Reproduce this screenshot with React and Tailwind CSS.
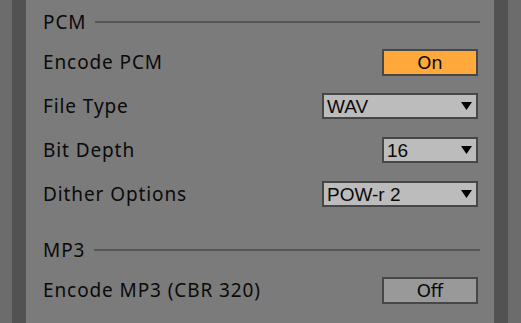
import React from 'react';

const labelFont = { fontFamily: '"Noto Sans", "Open Sans", sans-serif' };

const SectionHeading = ({ title, className = '' }) => (
  <div className={`flex items-center h-[40px] pt-[4px] pr-[14px] ${className}`}>
    <span className="text-[19px] leading-none tracking-[0.9px] text-[#0a0a0a]" style={labelFont}>{title}</span>
    <div className="flex-1 h-[2px] bg-[#555555] ml-[9px]" />
  </div>
);

const Row = ({ label, children }) => (
  <div className="flex items-center justify-between h-[44px] pr-[16px]">
    <span className="text-[19px] leading-none tracking-[0.9px] text-[#0a0a0a]" style={labelFont}>{label}</span>
    {children}
  </div>
);

const Toggle = ({ on, text }) => (
  <div
    className={`w-[96px] h-[27px] border-2 border-[#474747] flex items-center justify-center text-[18px] text-[#0a0a0a] ${on ? 'bg-[#ffa93c]' : 'bg-[#999999]'}`}
    style={{ fontFamily: '"DejaVu Sans", Verdana, sans-serif' }}
  >
    {text}
  </div>
);

const Dropdown = ({ value, width }) => (
  <div
    className={`${width} h-[26px] border-2 border-[#474747] bg-[#bcbcbc] flex items-center justify-between pl-[3px] pr-[4px] text-[19px] text-[#0a0a0a]`}
    style={{ fontFamily: '"Liberation Sans", Arial, sans-serif' }}
  >
    <span className="leading-none">{value}</span>
    <svg width="11" height="8" viewBox="0 0 11 8">
      <polygon points="0,0 11,0 5.5,8" fill="#000" />
    </svg>
  </div>
);

export default function App() {
  return (
    <div className="w-[521px] h-[323px] bg-[#6c6c6c] flex overflow-hidden">
      <div className="w-[12px]" />
      <div className="w-[14px] bg-[#525252]" />
      <div className="flex-1 bg-[#7b7b7b] pl-[17px]">
        <SectionHeading title="PCM" />
        <Row label="Encode PCM"><Toggle on text="On" /></Row>
        <Row label="File Type"><Dropdown value="WAV" width="w-[156px]" /></Row>
        <Row label="Bit Depth"><Dropdown value="16" width="w-[96px]" /></Row>
        <Row label="Dither Options"><Dropdown value="POW-r 2" width="w-[156px]" /></Row>
        <SectionHeading title="MP3" className="mt-[12px]" />
        <Row label="Encode MP3 (CBR 320)"><Toggle text="Off" /></Row>
      </div>
      <div className="w-[14px] bg-[#525252]" />
      <div className="w-[13px]" />
    </div>
  );
}
